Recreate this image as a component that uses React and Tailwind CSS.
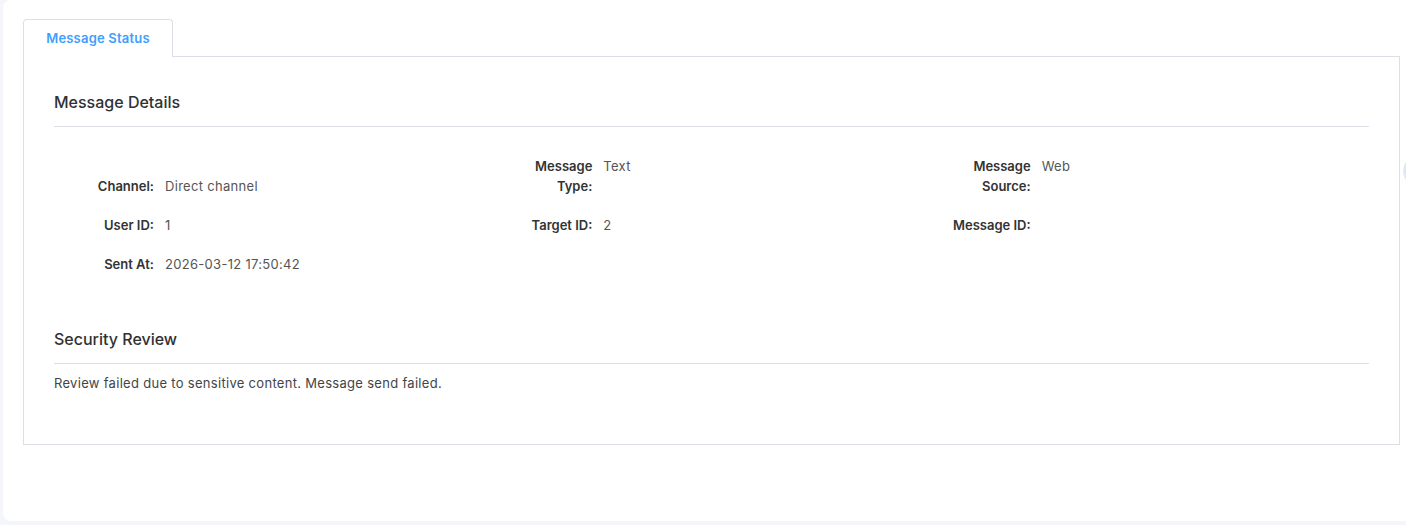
export default function App() {
  const rows = [
    [
      { label: ["Channel:"], value: "Direct channel" },
      { label: ["Message", "Type:"], value: "Text" },
      { label: ["Message", "Source:"], value: "Web" },
    ],
    [
      { label: ["User ID:"], value: "1" },
      { label: ["Target ID:"], value: "2" },
      { label: ["Message ID:"], value: "" },
    ],
    [{ label: ["Sent At:"], value: "2026-03-12 17:50:42" }],
  ];

  return (
    <div
      className="relative h-[525px] w-[1406px] overflow-hidden bg-[#f4f6fb] pl-[3px] text-[13px]"
      style={{ fontFamily: 'Inter, "Liberation Sans", Arial, sans-serif' }}
    >
      <div className="h-[521px] rounded-l-lg bg-white pl-[20px] pr-[6px] pt-[19px]">
        {/* TABS */}
        <div className="flex">
          <div className="relative z-10 -mb-px flex h-[38px] w-[150px] items-center justify-center rounded-t border border-b-0 border-[#dcdfe6] bg-white font-semibold tracking-[0.2px] text-[#409eff]">
            Message Status
          </div>
        </div>

        {/* PANEL */}
        <div className="h-[389px] border border-[#dcdfe6] px-[30px] pt-[33px]">
          <h2 className="border-b border-[#dcdfe6] pb-[12px] text-base leading-6 font-medium text-[#303133]">
            Message Details
          </h2>

          <div className="flex flex-col gap-[19px] pt-[29px]">
            {rows.map((row, i) => (
              <div key={i} className="grid grid-cols-3 items-end">
                {row.map((f) => (
                  <div key={f.label.join(" ")} className="flex items-start leading-5">
                    <span className="w-[100px] shrink-0 text-right font-semibold text-[#333]">
                      {f.label.map((l, j) => (
                        <span key={j} className="block">
                          {l}
                        </span>
                      ))}
                    </span>
                    <span className="pl-[11px] tracking-[0.3px] text-[#555]">{f.value}</span>
                  </div>
                ))}
              </div>
            ))}
          </div>

          <h2 className="mt-[53px] border-b border-[#dcdfe6] pb-[12px] text-base leading-6 font-medium text-[#303133]">
            Security Review
          </h2>
          <p className="mt-[9px] leading-5 tracking-[0.3px] text-[#444]">
            Review failed due to sensitive content. Message send failed.
          </p>
        </div>
      </div>

      {/* floating button peeking in */}
      <div className="absolute left-[1403px] top-[155px] h-[32px] w-[32px] rounded-full bg-[#dbe9fb]" />
    </div>
  );
}
